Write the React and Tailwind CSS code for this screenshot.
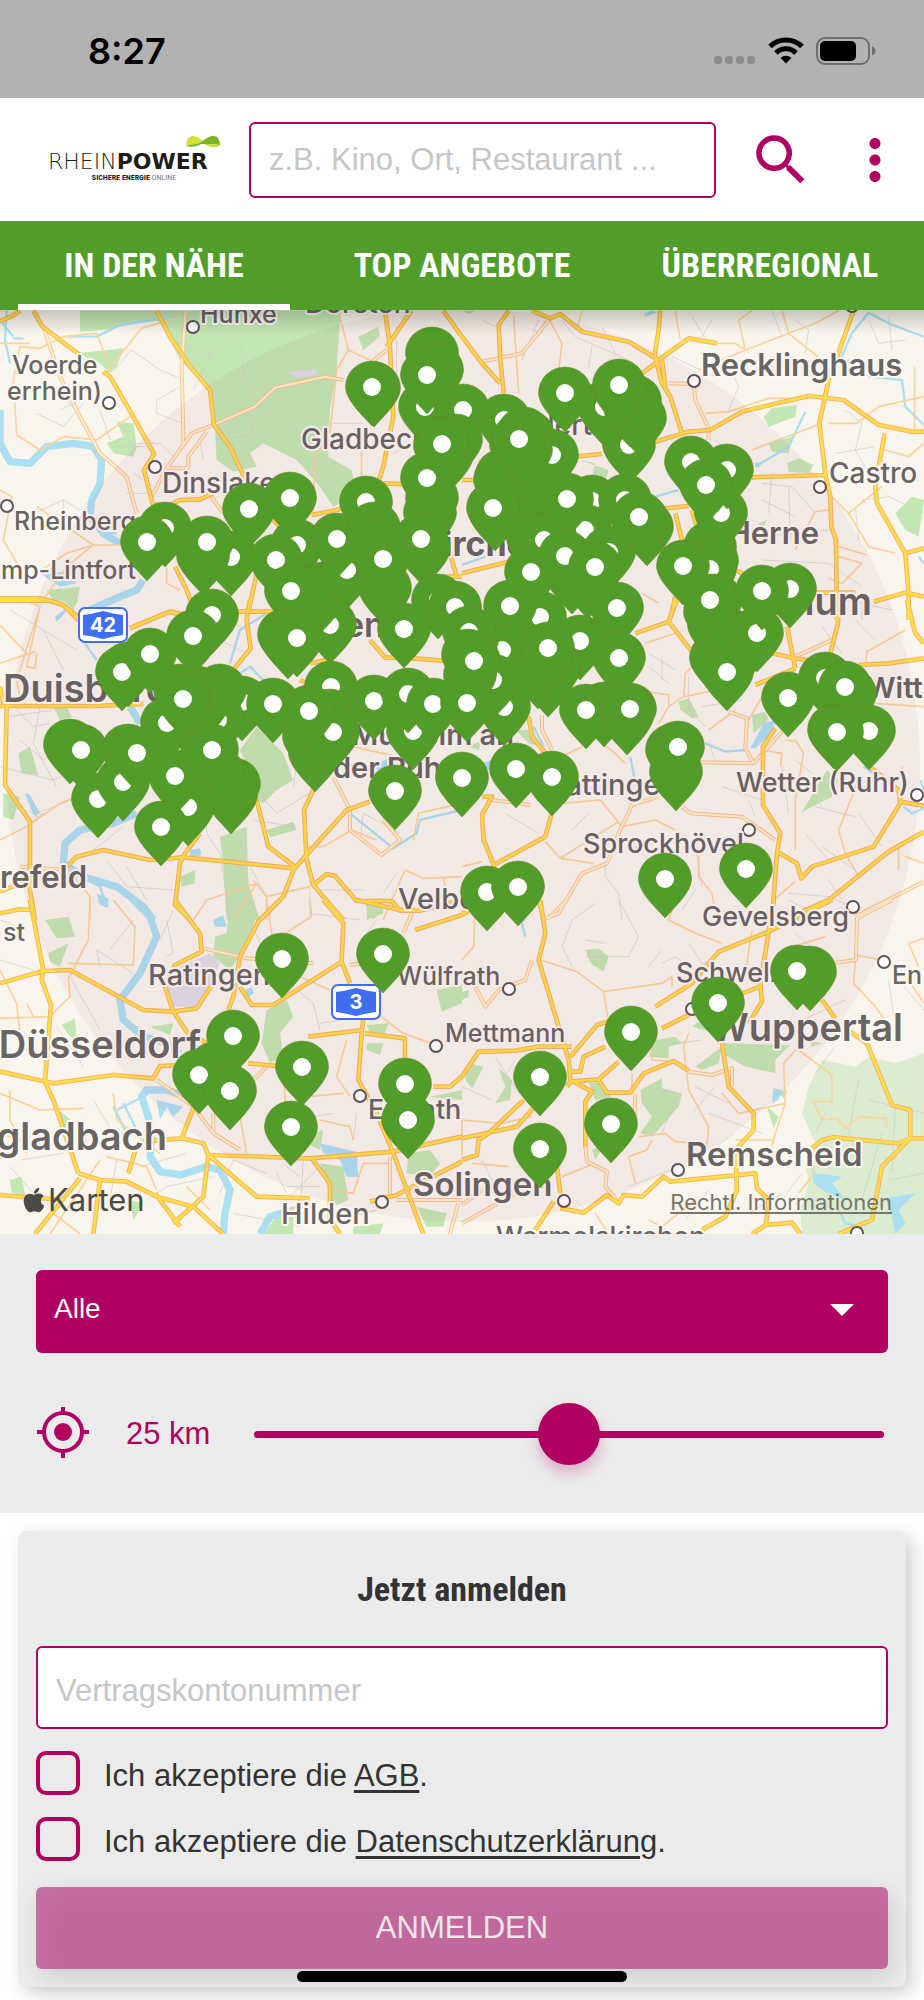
import { useState } from 'react';
import { FaApple } from 'react-icons/fa';
import { MdMoreVert, MdSearch } from 'react-icons/md';

const TABS = ['IN DER NÄHE', 'TOP ANGEBOTE', 'ÜBERREGIONAL'];

// Map tiles, 462px wide each, with paths stored at three times the drawn size
const TILES = [
  {
    x: 0,
    y: 300,
    motorways: 'M0 64L40 46 60 32M100 32L126 78 180 120 240 165M310 215L330 230 400 350 462 462 432 510 458 612 500 620M470 32L510 110 575 205 630 270 642 375 690 440 730 525 760 570M500 620L540 600 600 598 640 580M0 895L120 895 190 915 240 955M1155 32L1170 140 1180 350 1150 500 1130 560M1235 32L1160 140M1330 32L1386 110M935 645L1010 630 1040 620M1150 550L1220 553M525 800L560 870 590 950M775 800L745 935M400 980L510 935 560 945M820 660L860 700M1350 760L1370 830 1386 830M1250 830L1386 830',
    streets: 'M557 32L545 200 550 400 550 430M130 80L180 230 240 350 300 460 380 530 410 640M1030 240L975 230 825 263 765 320 640 375 575 400 500 505M620 395L565 470 565 505 500 505 455 590M630 585L670 640M1160 150L1110 190',
    lanes: 'M540 50L425 85 320 215M325 190L290 100 190 110 120 145 60 140 40 240 50 405 120 450 190 410 290 420 390 350M0 130L90 130M1015 32L1045 150 1010 210 990 400M1045 150L1130 190M0 570L35 590 10 720 80 840 200 760 280 735 360 735M110 620L280 735 200 800 130 900M940 640L945 470 1000 400M1085 400L1085 530M500 800L500 850 540 870',
    paths: 'M190 600L190 680M190 600L240 630 270 600M190 600L60 660M395 150L340 215M395 150L480 210 540 235M540 260L470 300 470 340 550 370M200 300L240 350M300 330L330 420M400 520L460 560M380 580L440 580M700 120L725 130 730 230 760 290M540 130L630 165 700 120M630 165L580 270M650 420L750 405 755 370 740 320M1190 80L1190 240M1000 370L1090 370M390 430L480 430 520 470M420 400L460 430M330 440L440 440M180 330L240 300M110 340L190 380 250 310M1180 460L1240 430M600 420L610 480',
    rivers: 'M0 330L0 430 30 485 90 490 140 440 220 430 280 440 305 480 300 550 275 600 270 650 310 700 360 730M430 840L410 870 360 890 270 930',
    streams: 'M20 32L15 120 30 190M0 60L40 110M40 115L70 115M200 110L290 110 360 75 520 50M310 700L350 700',
    lakes: 'M120 820L200 815 230 850 180 860z',
    woods: 'M480 32L1022 32 1010 210 990 330 985 470 1055 510 1070 580 1000 620 960 560 890 480 790 430 750 460 770 500 700 515 650 480 645 385 630 270 540 180 505 110zM240 32L470 32 500 60 410 70 310 90 240 95zM230 160L370 145 350 200 330 220 300 190zM350 365L400 370 410 440 400 470 340 460 320 430 370 410zM1075 110L1135 80 1140 110 1090 150zM140 870L240 860 230 910 160 900z',
    built: 'M865 215L950 208 950 225 890 235z',
  },
  {
    x: 462,
    y: 300,
    motorways: 'M140 32L110 75 115 180 125 280M210 32L265 55 295 42 360 95 500 125 590 180 680 115 765 130M595 32L590 90 578 165 600 250 625 290 660 400M600 180L610 260M580 190L500 250M0 110L60 190 115 250M580 425L680 395 745 390 840 335 1040 288 1145 300 1250 375 1350 395 1386 395M1175 32L1100 240 1072 370 1090 520 1105 590 1108 680 1122 720 1125 960M870 532L1090 525M340 470L420 462M1268 400L1240 560 1245 610 1330 760 1386 745M1330 760L1340 880 1386 890M1340 875L1235 905M1340 880L1340 960M610 625L680 618M640 640L660 720M690 630L710 700M0 820L140 785M810 805L850 825M640 890L625 955M1060 878L1180 878M0 540L40 540',
    streets: 'M60 185L180 160 265 55M620 250L695 252 700 300 740 385 740 420',
    lanes: 'M155 50L170 280M265 65L300 130 290 210M360 32L345 85M640 32L655 120M765 130L820 130 850 150 980 100 1060 70 1130 32M960 32L980 100 1080 180 1150 190M850 150L830 60 870 32M850 150L710 210M730 340L800 335 920 295 1040 295M1100 370L1185 370 1250 320 1386 290M1100 580L1160 640 1220 740 1300 760M1160 640L1260 560M1270 450L1340 470 1386 430M1000 750L1060 635 1100 630M1130 740L1215 765M1130 770L1200 790 1140 850 1100 835M540 880L590 910M870 450L1080 370M1358 200L1358 390',
    paths: 'M210 90L240 100 250 60M300 60L340 110 500 180M390 140L380 200M520 130L570 180M690 50L740 130M750 60L720 110M800 190L830 260 800 330M870 180L960 210 1050 200M930 32L960 110M1000 60L1040 90 1030 160M1220 60L1250 130 1330 120M1280 50L1290 150M1150 330L1200 370 1180 450 1220 520M1120 460L1240 440M900 550L990 560 1060 640M900 600L1000 650M930 520L920 640M900 710L1100 690M980 560L985 720M1200 600L1280 590 1386 640M1180 620L1190 720M900 780L1100 790 1200 860M960 800L960 870M520 750L600 740M1000 870L1200 890 1200 960M1150 900L1290 930M230 60L180 180M60 60L100 80M420 80L460 160M630 170L760 230M760 420L820 480',
    rivers: '',
    streams: 'M1220 38L1170 100 1130 190M1220 38L1280 70 1386 110M1220 230L1320 240 1330 320 1386 375M1030 335L980 440 880 500M580 590L650 570M0 795L70 770M1370 770L1386 790',
    lakes: 'M875 490L900 485 890 505zM545 40L570 32 590 36 550 50z',
    woods: 'M930 325L1005 315 1000 350 920 380 905 350zM920 430L990 410 980 460 930 455zM975 490L1010 475 1055 495 1040 520 980 515zM1300 640L1350 590 1386 600 1370 710 1330 690zM350 480L440 510 430 540 390 530 400 490zM890 670L915 660 900 690zM0 32L40 32 20 42z',
    built: '',
  },
  {
    x: 0,
    y: 600,
    motorways: 'M0 2L150 2 190 15 235 60M750 0L740 60 752 145 700 210M390 85L510 35 560 50M660 35L820 35M0 318L280 318 430 312M20 318L15 555 90 665 90 870 105 960M200 800L230 770 310 750 450 780 550 772M600 700L555 760 540 790 525 915 570 960M550 772L885 805 915 770 1040 630 1110 605M770 600L805 740 885 800 850 890 780 960M940 570L912 630 920 780 940 855 1030 960M940 855L980 822 1005 828 1070 903 1175 903 1200 932 1260 932 1386 900M0 875L60 850M0 940L60 928 95 930M0 260L10 310M900 240L920 250M930 190L980 180M1110 120L1155 172 1240 175 1330 182',
    streets: 'M1000 530L1050 630 1050 690 1145 765 1200 720 1150 660M1235 930L1230 960M60 800L200 810',
    lanes: 'M70 0L120 20 50 240 60 290M120 20L80 200 105 205 110 160M105 155L0 190M0 75L80 160M0 720L80 680 180 610 230 590M90 670L130 640M200 800L270 890 270 960M620 900L770 850 700 960M620 900L580 960M760 840L800 890 800 960M800 890L930 860M1215 810L1150 960M1215 810L1270 835 1386 830M1130 720L1055 690 970 740 925 740M1150 590L1150 660M1386 610L1255 640 1240 720M1330 830L1340 880M1060 440L1190 470',
    paths: 'M30 30L130 90 190 210M130 90L230 150M50 330L100 380 150 370M120 320L100 430 170 560M150 400L280 470M60 420L130 480 200 430M30 350L160 330M0 500L160 540 210 520M30 620L110 640 240 590M320 780L380 860 520 870M280 750L370 680M380 800L440 900M620 620L620 700 660 760M660 760L690 960M700 770L750 850M750 800L800 890M760 560L830 640 960 560M900 430L880 560M760 660L880 680M960 870L1090 870M1080 720L1090 640 1200 700M1190 820L1150 880M930 780L930 960M1140 490L1230 560M620 90L680 60 740 90M660 120L740 160',
    rivers: 'M410 640L340 670 240 690 195 730 190 790 250 830 350 860 430 920 460 960M390 320L420 370',
    streams: 'M800 40L720 90 690 190M720 220L750 200 790 240M1050 640L1180 745 1250 700 1260 660 1386 630M255 130L290 180M80 580L110 650M210 810L300 860 320 915',
    lakes: 'M570 750L600 745 605 765 570 775zM1130 490L1180 470 1180 500 1130 510zM75 580L90 585 120 640 100 645zM290 880L325 895 325 925 300 915zM165 50L205 20 190 45 170 65z',
    woods: 'M720 450L770 380 820 430 850 460 880 540 830 570 790 610 770 600 740 490zM660 710L740 680 745 850 780 960 680 960 670 800zM800 690L880 665 890 690 810 712zM55 460L90 440 115 525 65 520zM10 580L60 590 40 660 10 650zM160 320L200 320 215 350 180 360zM540 830L585 810 585 850 545 860zM1100 900L1150 895 1150 940 1100 960zM190 0L235 0 220 30z',
    built: '',
  },
  {
    x: 462,
    y: 600,
    motorways: 'M520 100L620 65 645 0M620 65L690 155M975 80L1000 205M880 255L1000 205M930 160L1000 175 1040 180M1130 0L1128 70 1105 160M1190 195L1280 190 1386 175M1335 0L1360 100 1386 130M940 385L903 440 903 615 955 700 945 760 930 960M945 755L1005 790 1018 835 1050 800 1235 740 1315 610 1310 570M1315 605L1386 618M1386 695L1280 755 1100 900 1020 935M1230 505L1310 570M200 350L210 410 250 460M60 590L90 590 60 645 65 720 95 795 250 710 268 645M90 800L110 820M230 900L245 960M0 940L20 935',
    streets: 'M240 345L240 390 270 450M90 600L205 615M800 335L855 355 850 445 875 490 960 395M715 487L875 490M1000 170L1120 115M590 590L510 615 470 700 435 790 360 820 290 940 250 955M660 620L685 640 840 650 940 720M1386 845L1180 950',
    lanes: 'M550 130L640 100M520 270L620 285 620 320 590 370M620 320L665 290 670 220 690 200M670 290L760 270M740 390L820 330M900 290L860 360M1215 150L1210 195M1215 155L1330 90M1000 420L1025 460 1000 600 1000 750M900 450L960 460 955 500M970 420L1000 425M300 610L415 600 480 680 580 660 640 690M250 725L295 775 470 665M295 775L395 790M710 760L710 830 750 880 760 940M1130 690L1190 540M1130 690L1150 760 1190 830M940 895L1000 845M1310 810L1310 740M310 465L360 440M415 425L460 460 490 490M0 800L60 785M1240 310L1386 320M1320 500L1320 600M1386 790L1330 770',
    paths: 'M560 160L640 210M600 170L600 240M560 200L620 250M680 230L680 330 730 380M740 430L760 480M720 320L840 300M1080 80L1140 160M1180 60L1240 120M1240 230L1386 280M430 790L430 830 470 880 480 960M500 720L560 780M640 770L700 740 720 860M980 640L960 500M1030 540L1080 620M1060 620L1180 650M1190 640L1260 740M1030 700L1100 780M980 880L1100 890 1200 930M1100 840L1140 900M1080 740L1180 810M780 560L900 600M660 930L700 870M860 600L880 650M1050 520L1000 480M330 690L380 640M130 640L230 700M330 560L450 570',
    rivers: '',
    streams: 'M730 430L790 455 850 450M505 470L520 550M215 380L245 440M1205 500L1235 520M1325 620L1350 640 1386 625M1375 540L1386 570M170 950L190 960',
    lakes: 'M865 445L905 370 940 360 930 400 880 445zM60 490L90 480 90 510 60 510z',
    woods: 'M650 305L680 295 710 350 690 355 655 330zM870 345L910 335 920 360 875 400zM1095 510L1130 540 1110 590 1020 635zM20 440L60 420 50 450zM160 390L210 390 240 440 200 430z',
    built: '',
  },
  {
    x: 0,
    y: 900,
    motorways: 'M90 0L130 210 125 240 153 315 135 545 160 600 235 820M0 250L130 213 210 210 430 330 520 335 590 325 640 250M525 0L600 100 605 155 525 195 495 260 520 335 560 395 620 430M840 0L775 65 720 170 700 290 685 330M720 260L755 315 820 315 1025 185 1030 70 970 0M1025 185L1050 250M1090 360L1085 400 1075 540 1130 640 1180 760 1270 1002M925 410L1090 390M1095 400L1215 415 1215 480M0 515L160 550 340 525 460 535 480 498 550 495M745 490L830 498M580 625L545 715 610 730 625 765 610 890 520 970M430 725L545 715M625 765L930 775 1180 755 1386 710M625 765L770 890 930 895M935 775L990 850 990 960 1020 1002M235 820L300 840 380 845 470 890 580 920 670 1002M105 1002L240 835M300 840L280 1002M465 880L540 980M0 885L190 900M405 755L385 820M1300 560L1350 560 1386 530M1110 905L1190 885 1386 785M1070 0L1200 30 1240 28M1245 90L1386 45',
    streets: 'M610 145L740 175 940 190M1050 195L1090 190M1235 40L1210 100M470 540L580 620 640 700 720 750M640 640L640 700M800 500L740 560M1190 900L1386 900M1375 910L1350 1002M1170 770L1170 890',
    lanes: 'M270 0L265 120 205 235 210 290 150 350 0 355M340 0L405 80 400 195 205 190M0 210L50 310 60 400M80 310L100 350M800 0L820 130M930 0L935 50 870 90 810 150M340 580L350 660 480 760M0 580L120 630 250 625M30 570L30 660 80 760M0 700L120 740M300 780L150 1002M320 770L440 800 470 870M560 860L630 930M850 500L860 700M720 650L740 760M1130 340L1210 400 1320 440M1010 530L1040 420M1010 530L1050 590M920 590L1030 580M960 660L1050 680 1060 720M900 230L990 270M990 870L1060 880 1090 790 1170 790M1020 960L1130 930M860 930L930 920M160 940L240 1002',
    paths: 'M0 180L100 210M290 150L400 220M290 150L300 200M0 60L80 90M210 230L300 390M400 60L330 150M500 170L520 160 500 60M520 30L480 120M750 60L780 130M880 260L940 310 960 390M960 370L1080 350M910 780L900 950M860 860L960 860M840 920L960 800M900 830L860 800M1000 640L940 650M1060 720L1070 640M0 480L80 450 130 480M170 380L250 500M180 620L200 700M280 600L340 700M350 780L330 900M420 800L560 760M440 900L500 860 640 830M660 880L700 780 800 820M830 820L860 880M700 940L900 980M60 780L190 760M30 800L100 880M250 660L260 740M1100 100L1130 60M930 40L1080 60',
    rivers: 'M400 0L450 50 470 110 420 220 360 300 370 360 430 410 500 430 540 460M560 590L500 570 440 570 425 590 445 650 455 710 450 770 480 815 540 825 620 800 660 810 690 870 675 940 670 1002M780 1002L810 950 900 925',
    streams: 'M430 590L350 630M370 610L410 690M340 620L380 700M0 460L10 470',
    lakes: 'M640 60L670 45 680 80 645 80zM290 0L325 10 315 22zM470 600L550 620 520 650 500 620 480 660zM960 730L1070 755 1075 830 1040 830 1020 780 970 760zM735 270L755 262 762 280 742 294z',
    woods: 'M690 0L770 50 730 150 690 210 640 170 645 110 680 100zM135 60L205 50 225 110 170 115zM145 160L205 130 180 200 150 185zM185 375L225 355 230 420 210 410zM450 380L520 370 510 405zM800 330L860 300 880 350 840 400 850 470 810 490 785 430zM1100 375L1165 370 1155 400 1110 400zM1100 430L1150 430 1140 465 1100 450zM30 840L65 830 75 885 35 880zM175 630L215 660 225 700 185 690zM1310 270L1386 255 1386 310 1325 335zM1225 760L1290 750 1320 790 1290 830 1220 820zM940 700L970 690 960 750 920 730zM960 790L1030 800 1045 900 1000 920zM1250 920L1340 940 1330 980 1280 980zM790 1002L830 950 880 950 880 1002zM1060 980L1150 970 1140 1002 1060 1002zM390 900L430 910 400 960zM1290 590L1386 570 1386 600zM1090 0L1150 20 1120 60z',
    built: 'M500 260L540 200 630 160 660 190 640 240 590 320 520 320z',
  },
  {
    x: 462,
    y: 900,
    motorways: 'M235 0L250 100 230 180 320 480 325 540 390 575 370 605 370 740M0 45L30 25M325 470L405 375 520 340M580 320L690 250 770 155 920 95 1110 0M935 0L905 190 895 260 840 280M895 255L900 305 860 370M600 385L680 345M0 530L50 455 160 452 230 440 330 440M315 560L325 545 410 538 470 485M410 540L435 578 505 578 545 520 635 483 680 512M780 430L800 560 875 640 875 690 820 750 825 870 790 950 720 990M430 440L365 470 355 515 325 515M0 715L165 680 235 600M185 600L80 700 50 720 45 765 0 780M285 800L295 880M275 905L220 990M295 925L365 938 435 885 470 910 485 885 540 890 605 830 625 845 880 820 885 865 920 900M920 900L912 975 990 968 1015 1002M912 975L870 1002M1080 300L1120 355M1150 385L1215 430 1290 615 1345 630 1345 715 1260 800 1230 960 1130 1002M1050 745L1080 720 1115 712 1310 730 1345 715 1386 715',
    streets: 'M315 0L260 55M1290 0L1185 55 1182 180 1120 188M40 260L70 320 110 270 190 240 210 180M520 580L515 690M370 740L375 785 435 815 430 860 470 905M680 515L750 525 810 505 810 560M0 970L180 870 270 850M0 915L60 870',
    lanes: 'M40 0L35 140 0 180M235 180L345 215 425 275 600 250 630 230 630 260M425 275L440 370M640 0L620 60 700 100 780 130M870 90L860 150 850 230M1090 110L960 150M1180 165L1260 180M1180 180L1175 250 1240 320 1300 400M1340 130L1386 115M1340 130L1370 200M1340 240L1386 310M680 400L665 440 680 570 740 680 735 740M0 660L120 670 210 650M530 710L610 700 640 725 735 730M780 580L830 640 970 610 965 490 1010 440M970 610L940 700 930 740M1010 450L1110 525 1110 605 1055 605 1080 660 1125 655 1150 685 1190 650 1270 655 1275 680M500 770L555 750 570 720M500 770L520 850M820 720L930 720M1010 880L1050 830 1060 750M570 400L570 480 640 485M510 520L510 570M300 830L400 790M30 790L140 800M0 660L0 770M400 940L440 1002M560 960L600 980 700 900M1310 730L1300 780',
    paths: 'M330 60L400 10M330 60L300 140 330 200M370 120L430 130M470 0L530 110 500 170 370 170M600 190L640 170 700 210 740 180M560 200L600 150M1000 100L1060 150 1040 240M950 210L1050 320M680 130L720 190M780 30L830 60M980 0L1100 60M1300 230L1386 330M1280 240L1300 380M1000 370L1150 300M1120 440L1060 520M1190 540L1160 700M1220 600L1386 640M1160 700L1200 800M1260 700L1200 900M1090 640L1060 700M1300 620L1290 820M1280 840L1386 820M100 470L170 580M120 540L160 480M90 600L0 560M700 560L800 610M740 640L900 700M760 560L690 640M820 700L760 740M640 430L720 420M650 800L500 860M600 700L640 600M1020 820L960 900M670 960L740 870M860 940L960 880M500 660L460 600M380 940L340 900M60 780L100 860',
    rivers: '',
    streams: 'M175 50L190 110M1130 930L1150 970 1200 980',
    lakes: 'M930 610L935 565 960 570 950 600zM1040 740L1060 820 1140 830 1110 850 1150 900 1080 870 1055 850zM1270 895L1360 880 1310 930 1330 970 1300 1002 1290 950z',
    woods: 'M370 150L410 145 440 170 425 215 385 190zM780 430L985 435 940 480 940 520 850 500 780 460zM690 380L760 330 770 400zM700 500L780 440 770 490 720 510zM535 570L600 535 600 565 660 580 650 620 570 710 535 700 570 650 540 610zM380 550L420 545 445 590 400 600zM560 470L580 420 640 410 660 430 620 440 620 475zM20 490L65 500 30 565 10 540zM110 505L150 540 145 600 100 610 130 560zM915 620L950 650 935 685zM945 575L975 570 970 600zM390 750L430 730 400 780zM1040 420L1080 430 1050 440zM0 275L20 270 20 290 0 300z',
    built: '',
    park: 'M1080 480L1180 500 1220 470 1300 490 1386 460 1386 1002 1020 1002 1015 930 1040 850 1030 790 1060 730 1020 640 1040 560z',
  },
];

// text, x, baseline, size, weight, anchor
const PLACES = [
  ['Hünxe', 200, 323, 25, 500],
  ['Dorsten', 305, 313, 28, 500],
  ['Voerde', 12, 374, 25, 500],
  ['errhein)', 102, 400, 25, 500, 'end'],
  ['Gladbeck', 301, 449, 28, 500],
  ['Dinslaken', 162, 493, 28, 500],
  ['Rheinberg', 14, 530, 25, 500],
  ['mp-Lintfort', 136, 579, 25, 500, 'end'],
  ['Recklinghaus', 701, 376, 31, 600],
  ['Castro', 829, 483, 28, 500],
  ['Herten', 534, 435, 28, 500],
  ['Herne', 819, 544, 31, 600, 'end'],
  ['Gelsenkirchen', 308, 556, 34, 700],
  ['chum', 872, 615, 38, 600, 'end'],
  ['Essen', 286, 637, 34, 600],
  ['Duisburg', 3, 702, 38, 600],
  ['Witt', 866, 698, 29, 600],
  ['Mülheim an', 514, 745, 29, 600, 'end'],
  ['der Ruhr', 333, 778, 29, 600],
  ['Hattingen', 678, 795, 29, 500, 'end'],
  ['Wetter (Ruhr)', 736, 792, 27, 500],
  ['Sprockhövel', 583, 853, 27, 500],
  ['Gevelsberg', 702, 926, 27, 500],
  ['Schwelm', 676, 982, 27, 500],
  ['Wuppertal', 903, 1041, 38, 600, 'end'],
  ['En', 892, 984, 25, 500],
  ['refeld', 87, 888, 31, 600, 'end'],
  ['st', 25, 941, 25, 500, 'end'],
  ['Ratingen', 148, 985, 29, 500],
  ['Velbert', 398, 909, 29, 500],
  ['Wülfrath', 397, 985, 25, 500],
  ['Mettmann', 445, 1042, 25, 500],
  ['Düsseldorf', 201, 1058, 38, 600, 'end'],
  ['gladbach', 167, 1150, 38, 600, 'end'],
  ['Erkrath', 368, 1119, 27, 500],
  ['Solingen', 413, 1196, 33, 600],
  ['Hilden', 281, 1224, 29, 500],
  ['Remscheid', 686, 1166, 33, 600],
  ['Wermelskirchen', 496, 1246, 27, 500],
];

const TOWN_DOTS = [
  [193, 327], [109, 403], [155, 467], [7, 506], [694, 381], [852, 306], [820, 487],
  [749, 830], [917, 795], [853, 907], [692, 1009], [884, 962], [509, 989], [436, 1046],
  [360, 1096], [382, 1202], [564, 1201], [678, 1170], [857, 1233],
];

// Dot centre of every offer, later ones lie on top. A third value hides the dot.
const PINS = [
  [432, 353, 1], [437, 370, 1], [425, 407], [427, 375], [374, 388, 1], [372, 387],
  [463, 410], [504, 420], [552, 455], [502, 475, 1], [500, 480, 1],
  [528, 436, 1], [524, 433, 1], [516, 445, 1], [526, 450, 1], [519, 439],
  [629, 445], [604, 407], [635, 401, 1], [640, 418, 1], [630, 408, 1], [620, 390, 1], [565, 393], [619, 385],
  [456, 440, 1], [447, 455, 1], [443, 442, 1], [440, 446, 1], [442, 444], [430, 513, 1], [432, 498, 1], [427, 478],
  [290, 498], [231, 557], [249, 509], [165, 528], [147, 542], [203, 556, 1], [207, 542],
  [592, 501], [585, 530], [609, 552], [534, 510, 1], [545, 520, 1], [553, 499, 1], [549, 497, 1], [567, 499],
  [495, 512, 1], [493, 508],
  [710, 547], [721, 513], [691, 462], [727, 470], [706, 485],
  [625, 500], [647, 527, 1], [642, 520, 1], [639, 517],
  [297, 545], [300, 590, 1], [324, 592, 1], [330, 625], [322, 588, 1], [317, 598], [308, 592, 1], [276, 560], [291, 591],
  [347, 570], [337, 539], [366, 502], [424, 548, 1], [421, 539],
  [374, 528, 1], [380, 540], [372, 545, 1], [385, 588, 1], [383, 559],
  [533, 538, 1], [544, 540], [572, 575, 1], [588, 580, 1], [565, 556], [595, 567], [531, 572],
  [712, 561, 1], [710, 569], [716, 600, 1], [683, 566],
  [212, 615], [193, 636],
  [284, 635, 1], [288, 640, 1], [297, 638],
  [438, 600], [455, 607], [404, 629], [540, 617], [510, 606], [617, 608],
  [580, 641], [502, 650], [472, 640, 1], [469, 632], [468, 655, 1], [504, 707], [493, 680],
  [470, 675, 1], [474, 661],
  [548, 678, 1], [538, 670, 1], [554, 668, 1], [546, 657, 1], [548, 648], [619, 658],
  [727, 633, 1], [722, 645, 1], [735, 655, 1], [757, 633], [716, 658, 1], [714, 625, 1], [710, 612, 1], [710, 600],
  [790, 589], [762, 591], [727, 672],
  [128, 668, 1], [122, 672], [150, 654],
  [242, 702], [220, 690, 1], [218, 720], [197, 692, 1], [205, 700, 1],
  [167, 723], [180, 690, 1], [185, 700, 1], [183, 699], [273, 704],
  [331, 687], [315, 753, 1], [330, 715, 1], [309, 737, 1], [333, 732], [309, 711], [374, 701],
  [413, 731], [408, 694], [433, 704], [467, 703],
  [70, 745, 1], [81, 750], [98, 799], [128, 750, 1], [123, 782], [137, 753],
  [231, 795, 1], [234, 784, 1], [218, 773, 1], [188, 807], [175, 776], [207, 751, 1], [212, 750], [161, 827],
  [604, 708, 1], [586, 710], [627, 716, 1], [630, 709],
  [825, 678], [850, 694, 1], [845, 687], [788, 698], [869, 731], [834, 730, 1], [837, 732],
  [672, 750, 1], [676, 772, 1], [678, 747],
  [395, 791], [462, 778], [552, 777], [516, 769],
  [487, 892], [518, 887], [665, 879], [746, 869],
  [282, 959], [383, 954], [233, 1036], [214, 1068, 1], [199, 1075], [230, 1091], [302, 1067], [291, 1127],
  [405, 1084], [408, 1120], [631, 1032], [540, 1077], [540, 1149], [611, 1124],
  [718, 1003], [810, 972, 1], [797, 971],
];

const TileLayer = ({ layer, ...props }) => (
  <g strokeLinejoin="round" {...props}>
    {TILES.map((tile) => (
      <path key={`${tile.x}-${tile.y}`} d={tile[layer] || ''} transform={`translate(${tile.x} ${tile.y}) scale(.3333)`} />
    ))}
  </g>
);

const RoadShield = ({ x, y, number }) => (
  <g transform={`translate(${x} ${y})`}>
    <rect x="1" y="1" width="48" height="34" rx="6" fill="#fff" stroke="#3f6ff0" strokeWidth="2" />
    <path d="M5 8Q14 7 25 4Q36 7 45 8V28Q36 29 25 32Q14 29 5 28Z" fill="#3f6ff0" />
    <text x="25" y="25" textAnchor="middle" fontSize="20" fontWeight="700" fill="#fff">{number}</text>
  </g>
);

const OfferMap = () => (
  <section className="relative overflow-hidden" aria-label="Karte">
    <svg viewBox="0 310 924 924" className="block w-full font-['Inter',sans-serif]">
      <rect y="310" width="924" height="924" fill="#f9f5ec" />
      <TileLayer layer="park" fill="#dbecd0" />
      <TileLayer layer="woods" fill="#c3e7b3" />
      <TileLayer layer="built" fill="#dfdde6" />
      <TileLayer layer="rivers" fill="none" stroke="#abdff2" strokeWidth="22" />
      <TileLayer layer="streams" fill="none" stroke="#abdff2" strokeWidth="7" />
      <TileLayer layer="lakes" fill="#abdff2" />
      <TileLayer layer="paths" fill="none" stroke="#cfccc8" strokeWidth="2" />
      <TileLayer layer="lanes" fill="none" stroke="#fbd39c" strokeWidth="5" />
      <TileLayer layer="streets" fill="none" stroke="#f8c692" strokeWidth="12" />
      <TileLayer layer="streets" fill="none" stroke="#fdf0cd" strokeWidth="6" />
      <TileLayer layer="motorways" fill="none" stroke="#f6b26b" strokeWidth="14" />
      <TileLayer layer="motorways" fill="none" stroke="#ffdf45" strokeWidth="8" />

      <g fill="#fff" stroke="#5d5556" strokeWidth="2">
        {TOWN_DOTS.map(([x, y]) => (
          <circle key={`${x}-${y}`} cx={x} cy={y} r="6" />
        ))}
      </g>
      <g fill="#686563" stroke="#fbf7f2" strokeWidth="4" strokeLinejoin="round" paintOrder="stroke">
        {PLACES.map(([name, x, y, size, weight, anchor]) => (
          <text key={name} x={x} y={y} fontSize={size} fontWeight={weight} textAnchor={anchor}>
            {name}
          </text>
        ))}
      </g>
      <circle cx="463" cy="765" r="457" fill="#811a4c" fillOpacity=".05" />
      <RoadShield x={78} y={607} number="42" />
      <RoadShield x={331} y={984} number="3" />

      {PINS.map(([x, y, covered]) => (
        <g key={`${x}-${y}`} transform={`translate(${x} ${y})`}>
          <path
            d="M0 39L-13 25C-20 17-26.500 8-26.500 0A26.500 26 0 0 1 26.500 0C26.500 8 20 17 13 25Z"
            fill="#529d2a"
            stroke="#6b8526"
            strokeWidth=".5"
          />
          {!covered && <circle r="9" fill="#fff" />}
        </g>
      ))}
    </svg>
    <div className="absolute inset-x-0 top-0 h-6 bg-linear-to-b from-black/20 to-transparent" />
    <div className="absolute bottom-4 left-5 flex items-center font-['Inter',sans-serif] text-[31px] leading-9 text-[#4b4a46]">
      <FaApple className="size-7" />
      Karten
    </div>
    <a href="#rechtliches" className="absolute right-8 bottom-5 font-['Inter',sans-serif] text-[22px] leading-6 text-[#77756e] underline underline-offset-2">
      Rechtl. Informationen
    </a>
  </section>
);

const StatusBar = () => (
  <div className="flex h-[98px] items-center justify-between bg-[#b2b2b2] pt-1 pr-12 pl-[88px] text-black">
    <span className="font-['Inter',sans-serif] text-[36px] leading-10 font-semibold">8:27</span>
    <div className="flex items-center gap-3">
      <svg viewBox="0 0 42 28" className="h-7 w-[42px]" fill="#8c8c8c">
        <rect x="0" y="19" width="8" height="8" rx="3" />
        <rect x="11" y="19" width="8" height="8" rx="3" />
        <rect x="22" y="19" width="8" height="8" rx="3" />
        <rect x="33" y="19" width="8" height="8" rx="3" />
      </svg>
      <svg viewBox="0 0 36 28" className="h-7 w-9" fill="none" stroke="#000" strokeWidth="5">
        <path d="M2 9.500A23 23 0 0 1 34 9.500" />
        <path d="M8 16A14 14 0 0 1 28 16" />
        <path d="M18 26.500L12.500 21A8 8 0 0 1 23.500 21Z" fill="#000" stroke="none" />
      </svg>
      <svg viewBox="0 0 60 28" className="h-7 w-[60px]">
        <rect x="1" y="1" width="52" height="26" rx="8" fill="none" stroke="#6e6e6e" strokeWidth="2" />
        <rect x="4" y="4" width="36" height="20" rx="5" />
        <path d="M56 9.500Q59.500 11 59.500 14T56 18.500Z" fill="#6e6e6e" />
      </svg>
    </div>
  </div>
);

const Logo = () => (
  <div className="w-[249px] shrink-0 pl-12">
    <div className="flex w-[172px] flex-col">
      <svg viewBox="0 0 34 12" className="h-3 w-[34px] self-end">
        <path d="M0 10C0 4 3 0 7 0C11 0 15 3 18 6C14 8 6 8 0 10Z" fill="#d6de38" />
        <path d="M12 8C16 6 19 3 22 1.500C24 0 26 0 28 0C32 0 34 5 34 9C28 8 22 8 18 8Z" fill="#78b52b" />
        <path d="M0 10C5 8 12 8 17 7C13 10 4 12 0 10Z" fill="#78b52b" />
        <path d="M18 8C23 8 29 8 34 9C31 13 23 11 18 8Z" fill="#cddb33" />
      </svg>
      <span className="pt-1 font-['DejaVu_Sans',sans-serif] text-[22px] leading-5 font-extralight whitespace-nowrap text-[#1d1d1b]">
        RHEIN<b className="font-bold">POWER</b>
      </span>
      <span className="self-center font-['Roboto_Condensed','Roboto',sans-serif] text-[8px] leading-3 whitespace-nowrap text-[#777]">
        <b className="text-[#1d1d1b]">SICHERE ENERGIE</b> ONLINE
      </span>
    </div>
  </div>
);

const App = () => {
  const [activeTab, setActiveTab] = useState(0);
  const [radius, setRadius] = useState(25);

  return (
    <div className="bg-white font-['Liberation_Sans',Arial,sans-serif] text-[31px] leading-9 text-[#333]">
      <StatusBar />

      <header className="flex h-[123px] items-center pr-4">
        <Logo />
        <input
          type="search"
          aria-label="Suche"
          placeholder="z.B. Kino, Ort, Restaurant ..."
          className="h-[76px] min-w-0 flex-1 rounded-md border-2 border-[#b00062] px-[18px] outline-none placeholder:text-[#c6c6c6]"
        />
        <button type="button" aria-label="Suchen" className="ml-8 text-[#b00062]">
          <MdSearch className="size-[66px]" />
        </button>
        <button type="button" aria-label="Menü" className="ml-7 text-[#b00062]">
          <MdMoreVert className="size-[66px]" />
        </button>
      </header>

      <nav className="grid h-[89px] grid-cols-3 bg-[#529d2a]">
        {TABS.map((tab, index) => (
          <button
            key={tab}
            type="button"
            onClick={() => setActiveTab(index)}
            className={`mx-[18px] border-b-6 pt-1 font-['Roboto_Condensed','Roboto',sans-serif] text-[34px] font-bold whitespace-nowrap text-white ${
              activeTab === index ? 'border-white' : 'border-transparent'
            }`}
          >
            {tab}
          </button>
        ))}
      </nav>

      <OfferMap />

      <section className="bg-[#ebebeb] px-9 pt-9 pb-12">
        <div className="relative">
          <select
            aria-label="Kategorie"
            className="h-[83px] w-full appearance-none rounded-md bg-[#b00062] px-[18px] pb-1.5 text-[28px] text-white outline-none"
          >
            <option>Alle</option>
          </select>
          <svg viewBox="0 0 24 12" className="pointer-events-none absolute top-[34px] right-[34px] h-3 w-6" fill="#fff">
            <path d="M0 0H24L12 12Z" />
          </svg>
        </div>
        <div className="mt-[50px] flex items-center text-[#b00062]">
          <svg viewBox="0 0 54 54" className="size-[54px] shrink-0" fill="none" stroke="currentColor" strokeWidth="4">
            <circle cx="27" cy="25" r="19" strokeWidth="4" />
            <path d="M27 0V6M27 44V51M1 25H8M46 25H53" />
            <circle cx="27" cy="25" r="9" fill="currentColor" stroke="none" />
          </svg>
          <label htmlFor="radius" className="w-[164px] shrink-0 pl-9 whitespace-nowrap">{radius} km</label>
          <input
            id="radius"
            type="range"
            min="0"
            max="50"
            value={radius}
            onChange={(e) => setRadius(Number(e.target.value))}
            className="mr-1 h-[62px] min-w-0 flex-1 appearance-none bg-transparent [&::-webkit-slider-runnable-track]:h-[7px] [&::-webkit-slider-runnable-track]:rounded-full [&::-webkit-slider-runnable-track]:bg-[#b00062] [&::-webkit-slider-thumb]:-mt-7 [&::-webkit-slider-thumb]:size-[62px] [&::-webkit-slider-thumb]:appearance-none [&::-webkit-slider-thumb]:rounded-full [&::-webkit-slider-thumb]:bg-[#b00062] [&::-webkit-slider-thumb]:shadow-[0_8px_14px_rgba(176,0,98,0.25)]"
          />
        </div>
      </section>

      <form
        onSubmit={(e) => e.preventDefault()}
        className="mx-[18px] mt-[18px] mb-[13px] rounded-lg bg-[#ebebeb] px-[18px] pb-[18px] shadow-[6px_6px_20px_rgba(0,0,0,0.2)]"
      >
        <h2 className="pt-10 pb-[39px] text-center font-['Roboto_Condensed','Roboto',sans-serif] text-[34px] font-bold">
          Jetzt anmelden
        </h2>
        <input
          type="text"
          aria-label="Vertragskontonummer"
          placeholder="Vertragskontonummer"
          className="h-[83px] w-full rounded-md border-2 border-[#b00062] bg-white px-[18px] pt-1.5 outline-none placeholder:text-[#c6c6c6]"
        />
        <label className="mt-[22px] flex items-center gap-6">
          <input type="checkbox" className="size-11 appearance-none rounded-[10px] border-4 border-[#b00062] checked:bg-[#b00062]" />
          <span className="pt-1.5">
            Ich akzeptiere die <a href="#agb" className="underline underline-offset-4">AGB</a>.
          </span>
        </label>
        <label className="mt-[22px] flex items-center gap-6">
          <input type="checkbox" className="size-11 appearance-none rounded-[10px] border-4 border-[#b00062] checked:bg-[#b00062]" />
          <span className="pt-1.5">
            Ich akzeptiere die <a href="#datenschutz" className="underline underline-offset-4">Datenschutzerklärung</a>.
          </span>
        </label>
        <button
          type="submit"
          className="mt-[26px] h-[82px] w-full rounded-md bg-[#c2679b] text-[#ebe6e9] shadow-[4px_8px_24px_rgba(0,0,0,0.13),inset_12px_12px_28px_rgba(255,255,255,0.06)]"
        >
          ANMELDEN
        </button>
      </form>

      <div className="fixed bottom-[18px] left-1/2 h-[11px] w-[330px] -translate-x-1/2 rounded-full bg-black" />
    </div>
  );
};

export default App;
